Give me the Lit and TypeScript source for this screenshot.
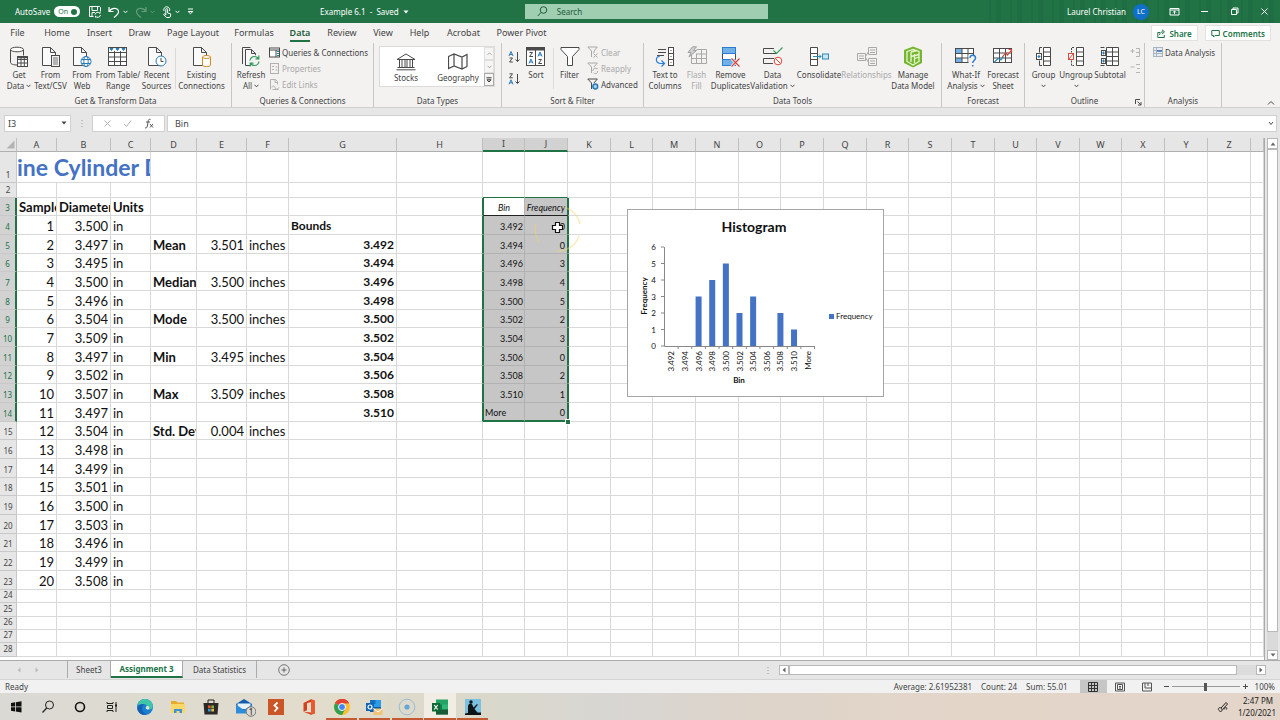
import { LitElement, html, svg, css, nothing } from "lit";
import { customElement, property, state } from "lit/decorators.js";
import { classMap } from "lit/directives/class-map.js";

const icon = (w: number, h: number, body: unknown) =>
  html`<svg width=${w} height=${h} viewBox="0 0 ${w} ${h}" fill="none" stroke="#4a4a4a" stroke-width="1" aria-hidden="true">${body}</svg>`;

const PAGE = svg`<path d="M1.5 1.5h8l5 5v13h-13zM9.5 1.5v5h5" fill="#fafafa"/>`;

const I = {
  getData: icon(20, 22, svg`<path d="M1.500 3.500v13c0 1.500 3 2.500 7 2.500M14.500 3.500v6" /><ellipse cx="8" cy="3.500" rx="6.500" ry="2.300" fill="#fff"/><rect x="8.500" y="10.500" width="10" height="10" fill="#fff"/><path d="M8.500 13.500h10M8.500 17h10M12 10.500v10M15.300 10.500v10"/><path d="M9 11.500h9" stroke-width="1.500"/>`),
  textCsv: icon(20, 22, svg`${PAGE}<rect x="10.500" y="9.500" width="8" height="11" fill="#f1f1f1"/><path d="M12 12h5M12 14h5M12 16h5M12 18h5" stroke="#777"/>`),
  web: icon(20, 22, svg`${PAGE}<circle cx="14" cy="15.500" r="5" fill="#fff" stroke="#2a7ab8"/><ellipse cx="14" cy="15.500" rx="2.200" ry="5" stroke="#2a7ab8"/><path d="M9.500 13.500h9M9.500 17.500h9" stroke="#2a7ab8"/>`),
  table: icon(20, 22, svg`<rect x=".5" y="1.500" width="18" height="18" fill="#fff"/><path d="M.5 6.500h18M.5 11h18M.5 15.500h18M6.500 5v15M12.500 5v15"/><path d="M2 2.500l1.500 2L5 2.500zM8 2.500l1.500 2 1.500-2zM14 2.500l1.500 2 1.500-2z" fill="#2a7ab8" stroke="#2a7ab8"/>`),
  recent: icon(20, 22, svg`${PAGE}<circle cx="14" cy="15" r="5" fill="#fff" stroke="#2a7ab8"/><path d="M14 12v3.500h2.500"/>`),
  existing: icon(20, 22, svg`${PAGE}<path d="M10.500 11v8c0 1 2 1.500 4 1.500s4-.5 4-1.500v-8" fill="#fff" stroke="#d58a1c"/><ellipse cx="14.500" cy="11" rx="4" ry="1.500" fill="#fff" stroke="#d58a1c"/>`),
  refresh: icon(20, 22, svg`<path d="M1.500 18v-16.500h8"/><path d="M4.500 3.500h6l4 4v12h-10zM10.500 3.500v4h4" fill="#fafafa"/><circle cx="13.500" cy="15" r="6" fill="#f3f2f1" stroke="none"/><path d="M9 14.500c.5-2.500 2-4 4.500-4 1.800 0 3 .8 4 2M18 15.500c-.5 2.500-2 4-4.500 4-1.800 0-3-.8-4-2M17.800 9.500v3.300h-3.300M9.200 20.500v-3.300h3.300" stroke="#2f9a5b" stroke-width="1.200"/>`),
  queries: icon(11, 11, svg`<rect x=".5" y="1" width="10" height="9" fill="#fff"/><path d="M.5 3h10M7 3v7"/><path d="M8 4.500h2M8 6.500h2M8 8.500h2" stroke="#2a8a9a"/>`),
  props: icon(11, 11, svg`<rect x="1.500" y=".5" width="8" height="10" stroke="#b0b0b0"/><path d="M3 3.500h2M3 6.500h2M6.500 4h2M6.500 7h2" stroke="#b0b0b0"/>`),
  links: icon(11, 11, svg`<path d="M1.500 10.500v-10h5l2 2v3M6 .5v3h3M3 8.500c0-2 3-2 3 0s3 2 4 0M3.500 10.500h6" stroke="#b0b0b0"/>`),
  stocks: icon(20, 18, svg`<path d="M1 6.500L10 1l9 5.500zM1.500 14.500h17M.5 16.800h19M3.500 7v7M6 7v7M9 7v7M11 7v7M14 7v7M16.500 7v7"/>`),
  geo: icon(20, 18, svg`<path d="M.5 3.500L6 1l8 3 5-2.500v12L14 16l-8-3-5.500 2.500zM6 1v12M14 4v12" stroke-width="1.200"/>`),
  az: icon(12, 12, svg`<path d="M9.500 1v9.500M7.500 8.500l2 2 2-2"/><path d="M1 5l2-4.500L5 5M1.700 3.500h2.600" stroke="#2a7ab8"/><path d="M1.500 7h3l-3 4h3.300"/>`),
  za: icon(12, 12, svg`<path d="M9.500 1v9.500M7.500 8.500l2 2 2-2"/><path d="M1.500 .8h3l-3 4h3.300"/><path d="M1 11.300l2-4.500 2 4.500M1.700 9.800h2.600" stroke="#2a7ab8"/>`),
  sort: icon(20, 22, svg`<rect x=".5" y="1.500" width="18" height="18" fill="#fff"/><path d="M.5 3h18" stroke-width="3"/><path d="M9.500 4v15M3.500 6.500h3l-3 4h3.500M12.500 13.500h3l-3 4h3.500"/><path d="M3 17.500l2-4.500 2 4.500M3.500 16h3M12 10.500l2-4.500 2 4.500M12.500 9h3" stroke="#2a7ab8"/>`),
  filter: icon(20, 22, svg`<path d="M1 1.500h18v2l-6.500 7v9h-5v-9L1 3.500z" fill="#fff"/>`),
  clear: icon(12, 12, svg`<path d="M.8 1h9.500L7 5v2M.8 1l3.700 4v6M6.500 7.500l4 4M10.500 7.500l-4 4" stroke="#a8a8a8"/>`),
  reapply: icon(12, 12, svg`<path d="M.8 1h9.500L7 5M.8 1l3.700 4v6M6 9a2.300 2.300 0 014-2v-1M10.500 9a2.300 2.300 0 01-4 2" stroke="#a8a8a8"/>`),
  advanced: icon(12, 12, svg`<path d="M.8 1h9.500L7 5M.8 1l3.700 4v6"/><circle cx="8.300" cy="8.500" r="2.400" fill="#a9d3ee" stroke="#2a7ab8" stroke-width="1.500"/>`),
  columns: icon(20, 22, svg`<path d="M3 3.500h8M3 6.500h8M2 9.500h7"/><rect x="13.500" y="1.500" width="5" height="18" fill="#fff"/><path d="M13.500 7.500h5M13.500 13.500h5M15.500 4.500h1M15.500 10.500h1M15.500 16.500h1"/><path d="M5 10c-5 1-5 7 1 7.500h3M6.500 14.500l3 3-3 3" stroke="#2b7cd3" stroke-width="1.200"/>`),
  flash: icon(20, 22, svg`<path d="M4.500 8v9.500h15v-14h-10M4.500 12.500h15M9 8h10.500M9.500 8v9.500M14.500 3.500v14" stroke="#a8a8a8"/><path d="M5.500 .8h4L6.500 4.500h3L2 11l2-4.500H1z" fill="#d0d0d0" stroke="#a0a0a0"/>`),
  dupes: icon(20, 22, svg`<rect x="1.500" y="1.500" width="13" height="18" fill="#fff"/><rect x="1.500" y="1.500" width="13" height="6" fill="#72b1e8" stroke="#2b7cd3"/><rect x="1.500" y="13.500" width="13" height="6" fill="#72b1e8" stroke="#2b7cd3"/><path d="M10.500 12.500l8 8M18.500 12.500l-8 8" stroke="#f1f1f1" stroke-width="3"/><path d="M10.500 12.500l8 8M18.500 12.500l-8 8" stroke="#d84a3d" stroke-width="1.200"/>`),
  valid: icon(20, 22, svg`<path d="M11 2.500H.5v5H13M11 12.500H.5v5H10" /><path d="M10.500 4.500l3 3 6-6" stroke="#3e9b5f" stroke-width="1.200"/><circle cx="15" cy="15" r="3.800" fill="#fff" stroke="#e0453a"/><path d="M12.500 12.500l5 5" stroke="#e0453a"/>`),
  consol: icon(20, 22, svg`<path d="M1.500 1.500h7v18h-7zM1.500 7.500h7M1.500 13.500h7" fill="#fff"/><path d="M4 10.500h8M10 8.500l2 2-2 2" stroke="#2a8ab0"/><rect x="13.500" y="8" width="6" height="5" fill="#cfe6f6" stroke="#2a8ab0"/>`),
  relat: icon(20, 22, svg`<path d="M.5 7.500h8v7h-8zM2 10h5M2 12.500h5M11.500 1.500h8v7h-8zM13 4h5M13 6.500h5M11.500 12.500h8v7h-8zM13 15h5M13 17.500h5M8.500 10.500l3-5M8.500 11.500l3 5" stroke="#a8a8a8"/>`),
  model: icon(20, 22, svg`<path d="M10 .5l9 3.500v13l-9 4.500L1 17V4z" fill="#74b62e" stroke="none"/><path d="M4 5.500l6-2 6 2v10l-6 3.500-6-3.500zM8 6v10M8 6l6-1.500M11.500 8v9M8 10.500l8-2M11.500 12.500l4.500-1.500" stroke="#e8f6d6" stroke-width="1.300"/>`),
  whatif: icon(22, 22, svg`<rect x=".5" y="2.500" width="18" height="14" fill="#fff"/><path d="M1 3h6v4.500H1zM1 12h6v4.500H1z" fill="#72b1e8" stroke="none"/><path d="M.5 2.500h18v14H.5zM.5 7.500h18M.5 12h18M7 2.500v14M13 2.500v14"/><path d="M13.500 9h8v13h-8z" fill="#f3f2f1" stroke="none"/><path d="M15 12c0-4 5.500-3.500 5.500 0 0 2.500-2.800 2.500-2.800 5M17.700 19v1.500" stroke="#2b7cd3" stroke-width="1.500"/>`),
  forecast: icon(20, 22, svg`<rect x=".5" y="2.500" width="18" height="14" fill="#fff"/><path d="M.5 7h18M.5 12h18M6.500 2.500v14M12.500 2.500v14"/><path d="M1 16.500l4-4 3 1.500 2-4" stroke="#2a8ab0" stroke-width="1.200"/><path d="M9.500 11l3-4 2 2 4-5M15.500 3.500h3v3" stroke="#d84a3d" stroke-width="1.200"/>`),
  group: icon(18, 22, svg`<path d="M7 1.500H4.500v5M4.500 14.500v5H7"/><path d="M8.500 1.500h7v18h-7zM8.500 6h7M8.500 10.500h7M8.500 15h7M12 1.500" fill="#fff"/><rect x="1.500" y="7.500" width="5" height="6" fill="#fff"/><path d="M2.500 10.500h3M4 9v3" stroke="#2a7ab8" stroke-width="1.200"/>`),
  ungroup: icon(18, 22, svg`<path d="M7 1.500H4.500v5M4.500 14.500v5H7" stroke-dasharray="2 1"/><path d="M9.500 1.500h7v18h-7zM9.500 6h7M9.500 10.500h7M9.500 15h7" fill="#fff"/><rect x="1.500" y="7.500" width="5" height="6" fill="#fff" stroke="#d84a3d"/><path d="M2 13l4-5" stroke="#d84a3d"/>`),
  subtotal: icon(20, 22, svg`<path d="M6.500 1.500h12v18h-12zM6.500 6h12M6.500 10.500h12M6.500 15h12M12.500 1.500v18" fill="#fff"/><path d="M.5 1.500h4M.5 19.500h4"/><rect x="1.500" y="4.500" width="4" height="5" fill="#fff"/><rect x="1.500" y="12.500" width="4" height="5" fill="#fff"/><path d="M2 7h3M3.500 5.500v3M2 15h3M3.500 13.500v3" stroke="#2a7ab8"/>`),
  show: icon(11, 11, svg`<path d="M.5 4h4M2.500 2v4M6 1.500h3.500v8H6M6 5.500h3.500" stroke="#b5b5b5"/>`),
  hide: icon(11, 11, svg`<path d="M.5 4h4M6 1.500h4M7 5.500h3M6 9.500h4" stroke="#b5b5b5"/>`),
  analysis: icon(11, 11, svg`<rect x="1.500" y=".5" width="9" height="9" fill="#e4ebf2" stroke="#a8b4c0"/><path d="M1.500 3.500h9M1.500 6.500h9M4.500 .5v9" stroke="#a8b4c0"/><path d="M5 4h5" stroke="#3a6ea8" stroke-width="1.500"/>`),
  caret: icon(5, 4, svg`<path d="M.5 .8l2 2 2-2" stroke="currentColor"/>`),
  solid: icon(6, 4, svg`<path d="M.5 .5h5l-2.500 3z" fill="currentColor" stroke="none"/>`),
};

interface Big { icon: unknown; lines: string[]; caret?: boolean; off?: boolean }
const big = (b: Big) => html`
  <button class=${classMap({ big: true, off: !!b.off })} ?disabled=${b.off}>
    <span class="pic">${b.icon}</span>
    ${b.lines.map((l, i) => html`<span class="line">${l}${b.caret && i === b.lines.length - 1 ? html`<span class="car">${I.caret}</span>` : nothing}</span>`)}
  </button>`;
const small = (pic: unknown, text: string, off = false) => html`
  <button class=${classMap({ small: true, off })} ?disabled=${off}>${pic}<span>${text}</span></button>`;

const UI = css`
  * { box-sizing: border-box; }
  button, input { font: inherit; color: inherit; margin: 0; padding: 0; border: 0; background: none; border-radius: 0; outline: 0; }
  svg { display: block; flex: none; }
`;

@customElement("title-bar")
class TitleBar extends LitElement {
  static styles = [UI, css`
    :host { display: grid; grid-template-columns: 25% 16% 19% 1fr; align-items: center; height: 23px; color: #fff; font-size: 8px; background: #217346; }
    .quick { display: flex; align-items: center; padding-left: 15px; }
    .quick button { display: flex; align-items: center; gap: 3px; margin-right: 7px; }
    .auto { display: flex; align-items: center; gap: 4px; margin-right: 2px; }
    .quick .toggle { display: flex; align-items: center; justify-content: space-between; width: 26px; height: 11px; padding: 0 3px 0 4px; border-radius: 6px; background: #fff; color: #217346; font-size: 7px; }
    .dot { width: 6px; height: 6px; border-radius: 50%; background: #217346; }
    .quick .dim { opacity: 0.3; }
    .doc { display: flex; align-items: center; gap: 4px; white-space: pre; }
    .search { display: flex; align-items: center; gap: 9px; height: 15px; padding-left: 12px; background: #9fceb1; color: #1e5c3a; }
    .search input { flex: 1; min-width: 0; }
    .search input::placeholder { color: #1e5c3a; opacity: 1; }
    .right { display: flex; align-items: center; justify-content: flex-end; height: 23px; padding-right: 10px;
      background: repeating-linear-gradient(90deg, transparent 0 9px, #1f6d42 9px 11px, transparent 11px 16px, #1f6e43 16px 21px) right / 300px 100% no-repeat; }
    .avatar { width: 16px; height: 16px; margin: 0 20px 0 7px; border-radius: 50%; background: #0f6fc9; font-size: 7px; line-height: 16px; text-align: center; }
    .win { display: flex; gap: 19px; }
  `];
  render() {
    return html`
      <div class="quick">
        <span class="auto">AutoSave <button class="toggle" aria-label="AutoSave">On<span class="dot"></span></button></span>
        <button aria-label="Save">${icon(12, 13, svg`<path d="M.5 1.500h10l1 1v4M.5 1.500v10h4M3 1.500v4h5.500v-4M3 11.500v-4h3M6 9.500a2.800 2.800 0 015-1v-1.500M11.500 10a2.800 2.800 0 01-5 1.200v1.300" stroke="#fff"/>`)}</button>
        <button aria-label="Undo">${icon(12, 12, svg`<path d="M1 1v4.500h4.500M1.200 5.200C4 1 10.500 1.500 10.500 6c0 2-1.500 3-4.500 5.500" stroke="#fff" stroke-width="1.200"/>`)}${I.caret}</button>
        <button class="dim" aria-label="Redo">${icon(12, 12, svg`<path d="M11 1v4.500H6.500M10.800 5.200C8 1 1.500 1.500 1.500 6c0 2 1.500 3 4.500 5.500" stroke="#fff" stroke-width="1.200"/>`)}${I.caret}</button>
        <button aria-label="Touch mode">${icon(10, 12, svg`<path d="M2 5a3 3 0 115.500 0M3.800 9V3.500a.9.9 0 011.800 0V7l3 .8v2.200l-1 1.500h-3L1.500 8.500l1-.7z" stroke="#fff"/>`)}${I.caret}</button>
        <button aria-label="Customize">${icon(7, 7, svg`<path d="M1 1h5M1.200 3.500l2.300 2.300 2.300-2.300z" stroke="#fff"/>`)}</button>
      </div>
      <div class="doc"><span>Example 6.1  -  Saved</span>${I.solid}</div>
      <label class="search">${icon(11, 11, svg`<circle cx="6.500" cy="4" r="3.300" stroke="#1e5c3a"/><path d="M4 6.500L.8 10" stroke="#1e5c3a"/>`)}<input placeholder="Search" aria-label="Search" /></label>
      <div class="right">
        <span>Laurel Christian</span><span class="avatar">LC</span>
        <span class="win">
          <button aria-label="Ribbon options">${icon(11, 11, svg`<path d="M1 2.500h9v6.500H1zM1 4h9M5.500 8V5.200M4 6.500l1.500-1.500L7 6.500" stroke="#fff"/>`)}</button>
          <button aria-label="Minimize">${icon(11, 11, svg`<path d="M2 5.500h7" stroke="#fff"/>`)}</button>
          <button aria-label="Restore">${icon(11, 11, svg`<path d="M2.500 3.500h5v5h-5zM4 3.500V2h5v5H7.500" stroke="#fff"/>`)}</button>
          <button aria-label="Close">${icon(11, 11, svg`<path d="M2.500 2.500l6 6M8.500 2.500l-6 6" stroke="#fff"/>`)}</button>
        </span>
      </div>`;
  }
}

@customElement("ribbon-bar")
class RibbonBar extends LitElement {
  @state() tab = "Data";
  static styles = [UI, css`
    :host { display: block; background: #f3f2f1; color: #444; border-bottom: 1px solid #d2d0ce; font-size: 8px; }
    .top { display: flex; justify-content: space-between; align-items: center; height: 20px; padding-right: 9px; }
    nav { display: grid; grid-template-columns: 35px 44px 41px 39px 68px 54px 38px 46px 36px 37px 51px 65px; }
    .tab { height: 20px; padding-top: 2px; font-size: 9px; justify-self: center; white-space: nowrap; }
    .tab span { display: block; line-height: 14px; border-bottom: 2px solid transparent; }
    .tab.on { color: #1e5c3a; font-weight: 600; }
    .tab.on span { border-color: #217346; }
    .actions { display: flex; gap: 7px; }
    .actions button { display: flex; align-items: center; gap: 3px; height: 16px; padding: 0 5px; border: 1px solid #e4e2e0; background: #fff; color: #217346; font-weight: 600; }
    .groups { display: grid; grid-template-columns: 232px 142px 128px 142px 298px 83px 120px 77px 1fr; height: 64px; }
    .group { display: grid; grid-template-rows: 52px 12px; border-right: 1px solid #c8c6c4; margin-bottom: 2px; position: relative; }
    .group:last-child { border: 0; }
    .body { display: grid; padding: 3px 0 0 4px; justify-content: start; }
    .title { text-align: center; line-height: 12px; white-space: nowrap; }
    .transform { grid-template-columns: 30px 33px 30px 42px 35px 3px 49px; }
    .queries { grid-template-columns: 30px 1fr; }
    .sorting { grid-template-columns: 14px 32px 3px 29px 1fr; }
    .tools { grid-template-columns: 34px 29px 39px 45px 48px 47px 46px; }
    .casting { grid-template-columns: 40px 34px; }
    .outline { grid-template-columns: 29px 36px 32px 1fr; }
    .big { display: flex; flex-direction: column; align-items: center; }
    .pic { height: 23px; }
    .line { display: flex; align-items: center; gap: 2px; height: 11px; line-height: 11px; white-space: nowrap; }
    .off { color: #a8a8a8; }
    .rule { border-left: 1px solid #dcdad8; margin: 2px 1px 6px; }
    .list { display: flex; flex-direction: column; gap: 4px; padding: 0 0 0 3px; }
    .small { display: flex; align-items: center; gap: 2px; height: 12px; white-space: nowrap; }
    .pair { display: flex; flex-direction: column; gap: 10px; padding: 5px 0 0 2px; }
    .minis { display: flex; flex-direction: column; gap: 5px; padding: 1px 0 0 4px; }
    .gallery { display: grid; grid-template-columns: 52px 52px 10px; height: 41px; margin: 3px 0 0 5px; width: 116px; border: 1px solid #dddbd9; background: #fff; }
    .card { display: flex; flex-direction: column; align-items: center; gap: 2px; padding-top: 6px; line-height: 10px; }
    .steps { display: grid; grid-template-rows: 13px 13px 13px; width: 10px; }
    .steps button { display: grid; place-items: center; border: 1px solid #e1dfdd; background: #f6f5f4; color: #aaa; }
    .steps button:last-child { border-color: #aaa; color: #333; }
    .launch { position: absolute; right: 2px; bottom: 1px; }
    .fold { display: flex; align-items: flex-end; justify-content: flex-end; padding: 0 5px 1px 0; }
  `];
  render() {
    const tabs = ["File", "Home", "Insert", "Draw", "Page Layout", "Formulas", "Data", "Review", "View", "Help", "Acrobat", "Power Pivot"];
    return html`
      <div class="top">
        <nav>${tabs.map(t => html`<button class=${classMap({ tab: true, on: t === this.tab })} @click=${() => (this.tab = t)}><span>${t}</span></button>`)}</nav>
        <div class="actions">
          <button>${icon(9, 9, svg`<path d="M3 3.500H.8v5h6.500V6M2.500 6C3 3.500 4.500 2.800 6 2.800M5 .8l2.500 2L5 5" stroke="#217346"/>`)}Share</button>
          <button>${icon(9, 9, svg`<path d="M.8 1.500h7.500v5H4L2.500 8V6.500H.8z" stroke="#217346"/>`)}Comments</button>
        </div>
      </div>
      <div class="groups">
        <section class="group"><div class="body transform">
          ${big({ icon: I.getData, lines: ["Get", "Data"], caret: true })}
          ${big({ icon: I.textCsv, lines: ["From", "Text/CSV"] })}
          ${big({ icon: I.web, lines: ["From", "Web"] })}
          ${big({ icon: I.table, lines: ["From Table/", "Range"] })}
          ${big({ icon: I.recent, lines: ["Recent", "Sources"] })}
          <span class="rule"></span>
          ${big({ icon: I.existing, lines: ["Existing", "Connections"] })}
        </div><div class="title">Get &amp; Transform Data</div></section>
        <section class="group"><div class="body queries">
          ${big({ icon: I.refresh, lines: ["Refresh", "All"], caret: true })}
          <div class="list">${small(I.queries, "Queries & Connections")}${small(I.props, "Properties", true)}${small(I.links, "Edit Links", true)}</div>
        </div><div class="title">Queries &amp; Connections</div></section>
        <section class="group"><div class="gallery">
          <button class="card">${I.stocks}Stocks</button>
          <button class="card">${I.geo}Geography</button>
          <div class="steps">
            <button aria-label="Up">${icon(5, 4, svg`<path d="M.5 2.800l2-2 2 2" stroke="currentColor"/>`)}</button>
            <button aria-label="Down">${I.caret}</button>
            <button aria-label="More types">${icon(6, 6, svg`<path d="M.5 .8h5M1 2.800h4L3 5z" stroke="currentColor"/>`)}</button>
          </div>
        </div><div class="title">Data Types</div></section>
        <section class="group"><div class="body sorting">
          <div class="pair"><button aria-label="Sort ascending">${I.az}</button><button aria-label="Sort descending">${I.za}</button></div>
          ${big({ icon: I.sort, lines: ["Sort"] })}
          <span class="rule"></span>
          ${big({ icon: I.filter, lines: ["Filter"] })}
          <div class="list">${small(I.clear, "Clear", true)}${small(I.reapply, "Reapply", true)}${small(I.advanced, "Advanced")}</div>
        </div><div class="title">Sort &amp; Filter</div></section>
        <section class="group"><div class="body tools">
          ${big({ icon: I.columns, lines: ["Text to", "Columns"] })}
          ${big({ icon: I.flash, lines: ["Flash", "Fill"], off: true })}
          ${big({ icon: I.dupes, lines: ["Remove", "Duplicates"] })}
          ${big({ icon: I.valid, lines: ["Data", "Validation"], caret: true })}
          ${big({ icon: I.consol, lines: ["Consolidate"] })}
          ${big({ icon: I.relat, lines: ["Relationships"], off: true })}
          ${big({ icon: I.model, lines: ["Manage", "Data Model"] })}
        </div><div class="title">Data Tools</div></section>
        <section class="group"><div class="body casting">
          ${big({ icon: I.whatif, lines: ["What-If", "Analysis"], caret: true })}
          ${big({ icon: I.forecast, lines: ["Forecast", "Sheet"] })}
        </div><div class="title">Forecast</div></section>
        <section class="group"><div class="body outline">
          ${big({ icon: I.group, lines: ["Group", ""], caret: true })}
          ${big({ icon: I.ungroup, lines: ["Ungroup", ""], caret: true })}
          ${big({ icon: I.subtotal, lines: ["Subtotal"] })}
          <div class="minis"><button aria-label="Show detail">${I.show}</button><button aria-label="Hide detail">${I.hide}</button></div>
        </div><div class="title">Outline</div>
          <button class="launch" aria-label="Outline settings">${icon(7, 7, svg`<path d="M.5 5V.5H5M2.500 2.500l3.500 3.500M6 3v3H3"/>`)}</button></section>
        <section class="group"><div class="body"><div class="list">${small(I.analysis, "Data Analysis")}</div></div><div class="title">Analysis</div></section>
        <section class="group fold"><button aria-label="Collapse ribbon">${icon(8, 6, svg`<path d="M1 4.500l3-3 3 3"/>`)}</button></section>
      </div>`;
  }
}

@customElement("formula-bar")
class FormulaBar extends LitElement {
  static styles = [UI, css`
    :host { display: grid; grid-template-columns: 67px 21px 73px 1fr; align-items: center; height: 30px; padding: 0 3px 0 4px; background: #e6e6e6; color: #444; font-size: 9px; }
    .box { display: flex; align-items: center; height: 17px; background: #fff; border: 1px solid #d0d0d0; padding: 0 4px; }
    input { flex: 1; min-width: 0; }
    .dots { justify-self: center; color: #999; }
    .fx { justify-content: space-around; padding: 0 4px; }
    .formula { margin-left: 2px; padding: 0 2px 0 7px; }
    .name { padding: 0 3px; }
  `];
  render() {
    return html`
      <div class="box name"><input aria-label="Name box" value="I3" />${I.solid}</div>
      <span class="dots">${icon(2, 9, svg`<path d="M1 1v1M1 4v1M1 7v1" stroke="#999"/>`)}</span>
      <div class="box fx">
        <button aria-label="Cancel">${icon(9, 9, svg`<path d="M1.500 1.500l6 6M7.500 1.500l-6 6" stroke="#b0b0b0"/>`)}</button>
        <button aria-label="Enter">${icon(9, 9, svg`<path d="M1 5l2.500 2.500L8 1.500" stroke="#b0b0b0"/>`)}</button>
        <button aria-label="Insert function">${icon(10, 11, svg`<path d="M6.500 1.500c-2-1-2.300 1-2.500 3L3.300 8c-.3 1.800-1 2.200-2.300 1.800M2 4h4M6 6l3 3.500M9 6L6 9.500" stroke="#555" stroke-width="1"/>`)}</button>
      </div>
      <div class="box formula"><input aria-label="Formula" value="Bin" />${icon(6, 5, svg`<path d="M1 1l2 2.500L5 1"/>`)}</div>`;
  }
}

@customElement("histogram-chart")
class HistogramChart extends LitElement {
  @property({ attribute: false }) bins: [string, number][] = [];
  static styles = [UI, css`
    :host { display: block; width: 257px; height: 188px; border: 1px solid #a6a6a6; background: #fff; font-family: Lato, "Liberation Sans", sans-serif; }
    text { fill: #111; stroke: none; font-size: 8px; }
    .head { font-size: 14px; font-weight: 700; }
    .name { font-weight: 700; }
  `];
  render() {
    const x0 = 36, y0 = 136, step = 150 / 11, unit = 16.5;
    return html`<svg width="255" height="186" viewBox="0 0 255 186" role="img" aria-label="Histogram">
      <text class="head" x="126" y="22" text-anchor="middle">Histogram</text>
      <path d="M${x0 + 0.5} 37V${y0 + 0.5}H187" fill="none" stroke="#888"/>
      ${[0, 1, 2, 3, 4, 5, 6].map(n => svg`<path d="M33 ${y0 - n * unit}h3" stroke="#888"/><text x="28" y=${y0 + 3 - n * unit} text-anchor="end">${n}</text>`)}
      ${this.bins.map(([name, n], i) => svg`
        <rect x=${x0 + step * (i + 0.5) - 2.5} y=${y0 - n * unit} width="6" height=${n * unit} fill="#4472c4"/>
        <path d="M${x0 + step * (i + 1) + 0.5} ${y0}v3" stroke="#888"/>
        <text transform="translate(${x0 + step * (i + 0.5) + 3.5} 141) rotate(-90)" text-anchor="end">${name}</text>`)}
      <text class="name" transform="translate(19 86) rotate(-90)" text-anchor="middle">Frequency</text>
      <text class="name" x="111" y="173" text-anchor="middle">Bin</text>
      <rect x="201" y="104" width="5" height="5" fill="#4472c4"/><text x="208" y="109">Frequency</text>
    </svg>`;
  }
}

const WIDTHS = [17, 40, 54, 40, 46, 50, 42, 108, 86, 42, 43, 43, 42, 43, 43, 42, 43, 43, 42, 43, 43, 42, 43, 42, 43, 43, 43];
const LETTERS = "ABCDEFGHIJKLMNOPQRSTUVWXYZ".split("");
const SAMPLES = ["3.500", "3.497", "3.495", "3.500", "3.496", "3.504", "3.509", "3.497", "3.502", "3.507", "3.497", "3.504", "3.498", "3.499", "3.501", "3.500", "3.503", "3.496", "3.499", "3.508"];
const BINS: [string, number][] = [["3.492", 0], ["3.494", 0], ["3.496", 3], ["3.498", 4], ["3.500", 5], ["3.502", 2], ["3.504", 3], ["3.506", 0], ["3.508", 2], ["3.510", 1], ["More", 0]];
const STATS: [string, string][] = [["Mean", "3.501"], ["Median", "3.500"], ["Mode", "3.500"], ["Min", "3.495"], ["Max", "3.509"], ["Std. Dev", "0.004"]];

type Cell = { text: string; cls: string };
const CELLS = new Map<string, Cell>();
const put = (ref: string, text: string, cls = "") => CELLS.set(ref, { text, cls });
put("A3", "Sample", "strong");
put("B3", "Diameter", "strong");
put("C3", "Units", "strong");
SAMPLES.forEach((v, i) => { put(`A${i + 4}`, `${i + 1}`, "num"); put(`B${i + 4}`, v, "num"); put(`C${i + 4}`, "in"); });
STATS.forEach(([k, v], i) => { const r = 5 + 2 * i; put(`D${r}`, k, "strong"); put(`E${r}`, v, "num"); put(`F${r}`, "inches"); });
put("G4", "Bounds", "mid strong");
put("I3", "Bin", "bin head");
put("J3", "Frequency", "bin head");
BINS.forEach(([k, n], i) => {
  if (k !== "More") put(`G${i + 5}`, k, "mid strong num");
  put(`I${i + 4}`, k, k === "More" ? "bin" : "bin num");
  put(`J${i + 4}`, `${n}`, "bin num");
});
const LAST_ROW = 28;
const rowHeight = (r: number) =>
  r === 1 ? 31 : r === 2 ? 15 : r <= 23 ? (r % 3 === 0 ? 18 : 19) : r === 25 || r === 28 ? 14 : 13;

@customElement("work-sheet")
class WorkSheet extends LitElement {
  static styles = [UI, css`
    :host { display: grid; grid-template-columns: 1fr 15px; flex: 1; min-height: 0; overflow: hidden; background: #e6e6e6; }
    .canvas { position: relative; overflow: hidden; border-right: 1px solid #ababab; background: #fff; }
    table { width: 100%; table-layout: fixed; border-collapse: separate; border-spacing: 0; font-family: Lato, "Liberation Sans", sans-serif; font-size: 13px; color: #111; }
    th { padding: 0; height: 14px; background: #e6e6e6; color: #444; font: 400 9px "Noto Sans", "Open Sans", sans-serif; line-height: 12px; border-right: 1px solid #c0c0c0; border-bottom: 1px solid #b0b0b0; }
    tbody th { height: auto; font-size: 8px; vertical-align: bottom; line-height: 10px; padding-bottom: 2px; border-color: #c8c8c8; }
    td { padding: 1px 2px 0; border-right: 1px solid #d9d9d9; border-bottom: 1px solid #d9d9d9; line-height: 16px; white-space: nowrap; overflow: hidden; vertical-align: middle; }
    td:empty { padding: 0; }
    .num { text-align: right; }
    .strong { font-weight: 700; }
    .mid { font-size: 12px; }
    .banner { font-size: 23px; font-weight: 700; color: #4472c4; line-height: 29px; padding: 1px 0 0; }
    .hot { background: #d2d2d2; color: #217346; }
    thead .hot { border-bottom: 2px solid #217346; color: #444; }
    tbody .hot { border-right: 2px solid #217346; }
    .sel { background: #c6c6c6; border-color: #b2b2b2; }
    .bin { font-size: 9px; padding: 3px 1px 0; line-height: 14px; }
    .head { font-style: italic; text-align: center; padding: 3px 0 0; border-bottom-color: #222; }
    .active { background: #fff; }
    .edge-l { border-left: 1px solid #217346; }
    .edge-r { border-right: 1px solid #217346; }
    .edge-b { border-bottom: 2px solid #217346; }
    .edge-t { border-bottom: 1px solid #217346; }
    .num.edge-r { padding-right: 2px; }
    .corner svg { margin-left: auto; }
    .chart { position: absolute; left: 627px; top: 71px; }
    .handle { position: absolute; left: 566px; top: 282px; width: 4px; height: 4px; background: #217346; outline: 1px solid #fff; }
    .cursor { position: absolute; left: 533px; top: 66px; }
    .scroll { display: grid; grid-template-rows: 11px 1fr 18px 10px; width: 11px; margin-left: 2px; }
    .scroll button, .thumb { border: 1px solid #b8b8b8; background: #fff; }
    .scroll button { display: grid; place-items: center; color: #666; }
    .track { background: #dadada; }
  `];
  private cell(col: string, r: number) {
    const c = CELLS.get(col + r);
    const band = r >= 3 && r <= 14;
    const inSel = (col === "I" || col === "J") && band;
    const cls = [
      c?.cls ?? "",
      inSel ? "sel" : "",
      band && (col === "I" || col === "K") ? "edge-l" : "",
      band && (col === "H" || col === "J") ? "edge-r" : "",
      inSel && r === 14 ? "edge-b" : "",
      r === 2 && (col === "I" || col === "J") ? "edge-t" : "",
      col === "I" && r === 3 ? "active" : "",
    ].filter(Boolean).join(" ");
    return html`<td class=${cls || nothing}>${c?.text ?? nothing}</td>`;
  }
  render() {
    const rows = Array.from({ length: LAST_ROW }, (_, i) => i + 1);
    return html`
      <div class="canvas">
        <table>
          <colgroup>${WIDTHS.map(w => html`<col style="width:${w}px" />`)}<col /></colgroup>
          <thead><tr>
            <th class="corner">${icon(11, 11, svg`<path d="M9.500 1.500v8h-8z" fill="#b4b4b4" stroke="none"/>`)}</th>
            ${LETTERS.map(l => html`<th class=${l === "I" || l === "J" ? "hot" : nothing}>${l}</th>`)}<th></th>
          </tr></thead>
          <tbody>${rows.map(r => html`<tr style="height:${rowHeight(r)}px">
            <th class=${r >= 3 && r <= 14 ? "hot" : nothing}>${r}</th>
            ${r === 1 ? html`<td class="banner" colspan="3">ine Cylinder D</td>` : nothing}
            ${LETTERS.slice(r === 1 ? 3 : 0).map(l => this.cell(l, r))}<td></td>
          </tr>`)}</tbody>
        </table>
        <span class="handle"></span>
        <histogram-chart class="chart" .bins=${BINS}></histogram-chart>
        <svg class="cursor" width="50" height="50" viewBox="0 0 50 50" fill="none" aria-hidden="true">
          <path d="M30 3a22 22 0 0117 17M46 32a22 22 0 01-22 15M6 38a22 22 0 01-3-18" stroke="#f3d36b" stroke-opacity=".45" stroke-width="1.500"/>
          <path d="M22.500 18.500h4v3h3v4h-3v3h-4v-3h-3v-4h3z" fill="#fff" stroke="#111" stroke-width="1.200"/>
        </svg>
      </div>
      <div class="scroll">
        <button aria-label="Scroll up">${icon(6, 4, svg`<path d="M.5 3.500h5L3 .5z" fill="#666" stroke="none"/>`)}</button>
        <span class="thumb"></span><span class="track"></span>
        <button aria-label="Scroll down">${I.solid}</button>
      </div>`;
  }
}

@customElement("status-area")
class StatusArea extends LitElement {
  @state() sheet = "Assignment 3";
  static styles = [UI, css`
    :host { display: block; color: #444; font-size: 8px; }
    .tabs { display: grid; grid-template-columns: 67px 44px 72px 74px 1fr 513px; height: 20px; background: #e6e6e6; border-top: 1px solid #ababab; border-bottom: 1px solid #d4d4d4; }
    .arrows { display: flex; gap: 14px; align-items: center; padding-left: 17px; }
    .sheet { height: 17px; border-right: 1px solid #ababab; white-space: nowrap; }
    .sheet.first { border-left: 1px solid #ababab; }
    .sheet.on { background: #fff; color: #217346; font-weight: 700; border-bottom: 2px solid #217346; }
    .add { display: flex; align-items: center; padding-left: 21px; }
    .bar { display: grid; grid-template-columns: 12px 10px 1fr 19px 10px 14px; align-items: center; height: 18px; }
    .bar button, .thumb { display: grid; place-items: center; height: 10px; border: 1px solid #b8b8b8; background: #fff; }
    .track { height: 10px; background: #dcdcdc; }
    .status { display: flex; align-items: center; height: 13px; padding: 0 5px; background: #f1f1f1; white-space: nowrap; }
    .ready { flex: 1; }
    .sums { display: flex; gap: 9px; margin-right: 12px; }
    .views { display: flex; margin-right: 2px; }
    .views button { display: grid; place-items: center; width: 27px; height: 13px; }
    .views .on { background: #c6c6c6; }
    .zoom { display: flex; align-items: center; gap: 2px; margin-right: 6px; }
    input { appearance: none; width: 68px; height: 9px; background: linear-gradient(#999, #999) center / 100% 1px no-repeat; }
    input::-webkit-slider-thumb { appearance: none; width: 3px; height: 8px; background: #555; }
  `];
  render() {
    const tab = (t: string, first = false) => html`<button class=${classMap({ sheet: true, first, on: this.sheet === t })} @click=${() => (this.sheet = t)}>${t}</button>`;
    const tri = (d: string, c = "#666") => icon(4, 6, svg`<path d=${d} fill=${c} stroke="none"/>`);
    return html`
      <div class="tabs">
        <div class="arrows">${tri("M3.500 .5v5L.5 3z", "#bbb")}${tri("M.5 .5v5l3-2.500z", "#bbb")}</div>
        ${tab("Sheet3", true)}${tab("Assignment 3")}${tab("Data Statistics")}
        <div class="add"><button aria-label="New sheet">${icon(12, 12, svg`<circle cx="6" cy="6" r="5.300" stroke="#777"/><path d="M3.500 6h5M6 3.500v5" stroke="#666"/>`)}</button></div>
        <div class="bar">
          ${icon(2, 9, svg`<path d="M1 1v1M1 4v1M1 7v1" stroke="#999"/>`)}
          <button aria-label="Scroll left">${tri("M3.500 .5v5L.5 3z")}</button><span class="thumb"></span><span class="track"></span>
          <button aria-label="Scroll right">${tri("M.5 .5v5l3-2.500z")}</button>
        </div>
      </div>
      <div class="status">
        <span class="ready">Ready</span>
        <span class="sums"><span>Average: 2.61952381</span><span>Count: 24</span><span>Sum: 55.01</span></span>
        <span class="views">
          <button class="on" aria-label="Normal">${icon(10, 10, svg`<path d="M.5 .5h9v9h-9zM.5 3.500h9M.5 6.500h9M3.500 .5v9M6.500 .5v9" stroke="#333"/>`)}</button>
          <button aria-label="Page layout">${icon(10, 10, svg`<path d="M.5 1h9v8h-9zM2.500 2.500h5v5h-5zM4 4.500h2M4 6h2" stroke="#555"/>`)}</button>
          <button aria-label="Page break">${icon(10, 10, svg`<path d="M.5 1h9v8h-9zM3 1v5h6.500M6 1v3" stroke="#555"/>`)}</button>
        </span>
        <span class="zoom"><button aria-label="Zoom out">${icon(7, 7, svg`<path d="M1 3.500h5"/>`)}</button>
          <input type="range" aria-label="Zoom" min="0" max="100" value="50" />
          <button aria-label="Zoom in">${icon(7, 7, svg`<path d="M1 3.500h5M3.500 1v5"/>`)}</button></span>
        <span>100%</span>
      </div>`;
  }
}

@customElement("task-bar")
class TaskBar extends LitElement {
  static styles = [UI, css`
    :host { display: flex; justify-content: space-between; height: 27px; color: #222; font-size: 8px; background: linear-gradient(90deg, #dad9d4, #e2dccb 26%, #d9d8cb 38%, #d8d6d3 48%, #ded4c9 60%, #e4d5c9 75%, #e3d5ca); }
    .left { display: flex; }
    .sys { display: grid; grid-template-columns: repeat(4, 32px); margin-right: 1px; }
    .apps { display: grid; grid-template-columns: repeat(11, 1fr); width: 360px; }
    button { display: grid; place-items: center; border-bottom: 2px solid transparent; padding-top: 2px; }
    .apps .open { border-image: linear-gradient(90deg, transparent 3px, #c45a32 3px calc(100% - 3px), transparent calc(100% - 3px)) 2; }
    .apps .front { background: #f2ede4; border-image: none; border-color: #c45a32; }
    .tray { display: flex; align-items: center; gap: 9px; padding-right: 4px; }
    time { text-align: right; line-height: 12px; }
    time span { display: block; padding-right: 3px; }
    time span + span { padding: 0; }
  `];
  render() {
    const app = (label: string, pic: unknown, cls = "") => html`<button class=${cls || nothing} aria-label=${label}>${icon(20, 20, pic)}</button>`;
    return html`
      <div class="left">
        <div class="sys">
          ${app("Start", svg`<path d="M5 6l4-.7v4.200H5zM9.800 5.200L15.500 4.200v5.300H9.800zM5 10.300h4v4.200L5 13.800zM9.800 10.300h5.700v5.300l-5.700-1z" fill="#111" stroke="none"/>`)}
          ${app("Search", svg`<circle cx="11.500" cy="8" r="4" stroke="#222"/><path d="M8.700 11L4.500 15.500" stroke="#222" stroke-width="1.200"/>`)}
          ${app("Cortana", svg`<circle cx="10" cy="10" r="4.500" stroke="#111" stroke-width="1.600"/>`)}
          ${app("Task view", svg`<path d="M5 5v1.500h6V5M5.500 8.500h5v3h-5zM5 15v-1.500h6V15M14 5v10" stroke="#222"/><path d="M13 7.500h2v2h-2z" fill="#222" stroke="none"/>`)}
        </div>
        <div class="apps">
          ${app("Edge", svg`<circle cx="10" cy="10" r="8" fill="#1b7fd0" stroke="none"/><path d="M2.500 8C4 3 8 1.500 11.500 2.200c4.500 1 6.500 4.300 6.300 7-.2 2.300-2 3.600-4.300 3.600-1.500 0-2.300-.7-1.800-1.700.8-1.300.2-3.800-2.700-4C6 7 3.500 8 2.500 8z" fill="#3fc6a8" stroke="none"/><path d="M9 7.200c-3 2.300-2.500 8 2.500 10.300-4 1.200-8-1-9-5C1.800 9.500 6 6.500 9 7.200z" fill="#1560b0" stroke="none"/><circle cx="12.500" cy="10.800" r="1.800" fill="#e8e4dc" stroke="none"/>`)}
          ${app("Files", svg`<path d="M3 4h5l1.500 1.500H16V16H3z" fill="#e8ac2a" stroke="none"/><path d="M3 7h14v9H3z" fill="#fbd766" stroke="none"/><path d="M6 16v-4h8v4h-2.500v-2h-3v2z" fill="#3b93d8" stroke="none"/>`)}
          ${app("Store", svg`<path d="M7 6V3h6v3" stroke="#222"/><path d="M2.500 6h15l-1 11.500h-13z" fill="#2c2a28" stroke="none"/><path d="M7 8.500h2.700v2.700H7z" fill="#e8502c" stroke="none"/><path d="M10.300 8.500H13v2.700h-2.700z" fill="#7db83a" stroke="none"/><path d="M7 11.800h2.700v2.700H7z" fill="#2a9be0" stroke="none"/><path d="M10.300 11.800H13v2.700h-2.700z" fill="#f3b72c" stroke="none"/>`)}
          <button aria-label="Mail"><svg width="24" height="20" viewBox="0 0 24 20"><path d="M4 7l8-5 8 5v9H4z" fill="#1260ad"/><path d="M5.500 6.500h13V12h-13z" fill="#e6f1fa"/><path d="M4 7.500l8 5.500 8-5.500V16.500H4z" fill="#2e8ddb"/><circle cx="19" cy="14.500" r="4.800" fill="#ddd8cf" stroke="#777"/><text x="19" y="17.500" font-size="8" text-anchor="middle" fill="#111">1</text></svg></button>
          ${app("Scribe", svg`<rect x="2" y="2" width="16" height="16" fill="#ca5527" stroke="none"/><path d="M11.500 5.500L8.500 8.500l3 2.500-3 3.500" stroke="#fff" stroke-width="1.800"/>`)}
          ${app("Office", svg`<path d="M4.500 6L12 2.200l4 1.500v12.600l-4 1.500-7.500-3L12 15.500V5L8 6.200v7l-3.500 1.500z" fill="#d4401c" stroke="none"/><path d="M12 2.200l4 1.500v12.600l-4 1.500z" fill="#ea5a2e" stroke="none"/>`)}
          ${app("Chrome", svg`<circle cx="10" cy="10" r="8" fill="#fbc02d" stroke="none"/><path d="M10 10L3.100 6A8 8 0 0117 6.200H10z" fill="#e04434" stroke="none"/><path d="M10 10l3.300 2L10 18A8 8 0 013.100 6z" fill="#33a050" stroke="none"/><path d="M3.100 6A8 8 0 0117 6.200h-7z" fill="#e04434" stroke="none"/><circle cx="10" cy="10" r="3.500" fill="#4285f4" stroke="#fff"/>`, "open")}
          ${app("Outlook", svg`<path d="M6 3h11v12H6z" fill="#2a9be6" stroke="none"/><path d="M6 3h5.500v4H6z" fill="#1470bd" stroke="none"/><path d="M6 10h11v5H6z" fill="#0f5ca8" stroke="none"/><path d="M2 6h8v8H2z" fill="#0f65b5" stroke="none"/><circle cx="6" cy="10" r="2" stroke="#fff" stroke-width="1.200"/><path d="M9.500 11.500h9v6.500h-9z" fill="#f0c377" stroke="none"/><path d="M9.500 11.500l4.500 3.500 4.500-3.500" stroke="#fff"/>`, "open")}
          ${app("Recorder", svg`<circle cx="10" cy="10" r="7.800" stroke="#9bbdd6"/><circle cx="10" cy="10" r="2.600" fill="#64a7d8" stroke="none"/>`, "open")}
          ${app("Excel", svg`<path d="M6 2.500h12v15H6z" fill="#21a366" stroke="none"/><path d="M6 7.500h6v5H6z" fill="#107c41" stroke="none"/><path d="M12 7.500h6v5h-6z" fill="#2fb777" stroke="none"/><path d="M6 12.500h12v5H6z" fill="#185c37" stroke="none"/><path d="M2 6h8v8.500H2z" fill="#0f6a38" stroke="none"/><path d="M4.200 8l3.500 4.500M7.700 8l-3.500 4.500" stroke="#fff" stroke-width="1.200"/>`, "front")}
          ${app("Kindle", svg`<rect x="2" y="2" width="16" height="16" fill="#7cc0e0" stroke="none"/><circle cx="8" cy="5" r="1.700" fill="#0d1418" stroke="none"/><path d="M5 16V10c0-2 1-3.500 2.500-3.500S9.500 8 10.500 10.500L14 7l.8.700-3.300 4.300 3 3.500H18V18H2v-1.500z" fill="#0d1418" stroke="none"/>`, "open")}
        </div>
      </div>
      <div class="tray">
        ${icon(12, 12, svg`<path d="M2 9.500c-2-2 1-4 2.500-2S4 12 2 9.500zM4 7L9 1.500l1.500 1.500L5.500 8.500M7 8.500c1.500-3 3.500-2 2.500 0" stroke="#222"/>`)}
        <time><span>2:47 PM</span><span>1/20/2021</span></time>
      </div>`;
  }
}

@customElement("app-root")
class AppRoot extends LitElement {
  static styles = css`
    :host { display: flex; flex-direction: column; height: 100vh; overflow: hidden; font-family: "Noto Sans", "Open Sans", sans-serif; background: #e6e6e6; }
  `;
  render() {
    return html`<title-bar></title-bar><ribbon-bar></ribbon-bar><formula-bar></formula-bar><work-sheet></work-sheet><status-area></status-area><task-bar></task-bar>`;
  }
}
